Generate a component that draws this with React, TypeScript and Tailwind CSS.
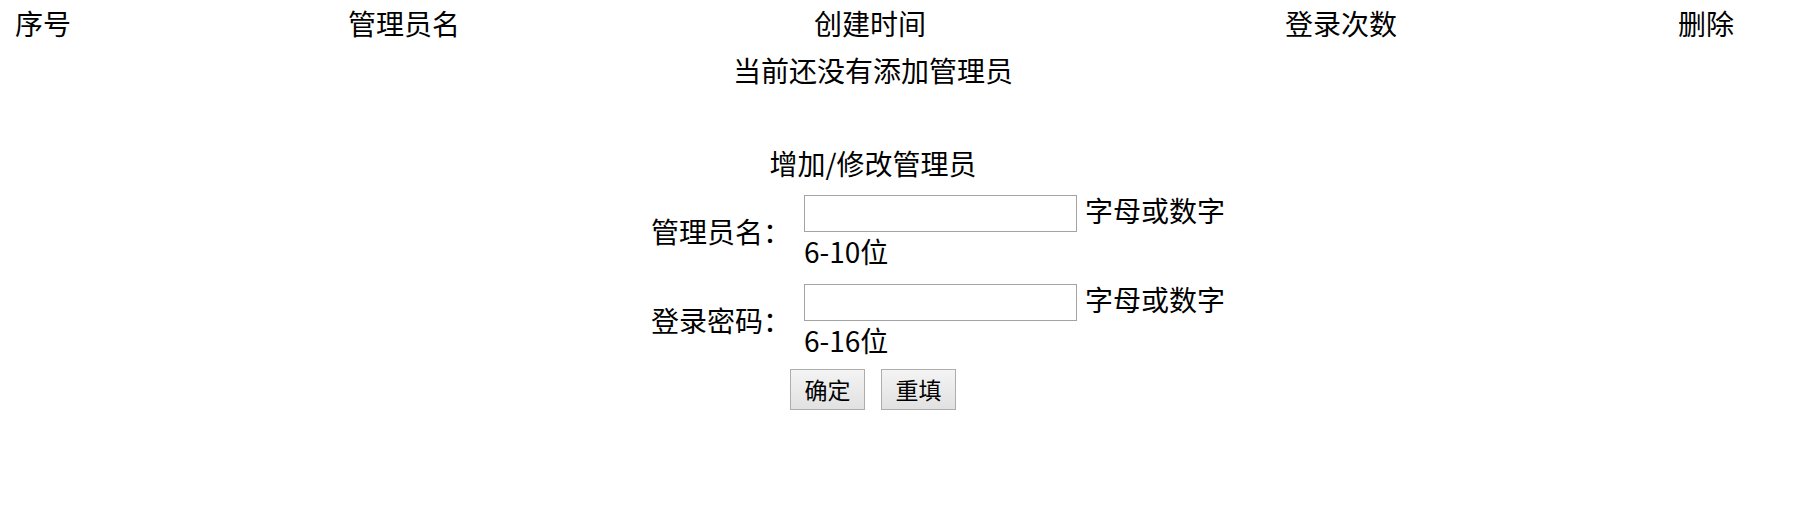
import React from 'react'

const font = "font-['Noto_Sans_CJK_SC','Noto_Sans',sans-serif]"

const FormRow: React.FC<{ label: string; hint: string; range: string }> = ({ label, hint, range }) => (
  <>
    <div className="flex items-center justify-end whitespace-nowrap leading-[30px]">{label}</div>
    <div className="flex flex-col whitespace-nowrap">
      <div className="flex items-start">
        <input type="text" className="h-[37px] w-[273px] shrink-0 border border-[#a3a3a3] bg-white outline-none" />
        <span className="ml-[8px] leading-[30px]">{hint}</span>
      </div>
      <span className="mt-[4px] leading-[30px]">{range}</span>
    </div>
  </>
)

const App: React.FC = () => {
  return (
    <div className={`min-h-[519px] bg-white text-black ${font}`}>
      <div className="ml-[14px] w-[1718px] text-[28px]">
        {/* Table head */}
        <div className="grid grid-cols-[58px_664px_268px_674px_56px] whitespace-nowrap text-center leading-[47px]">
          <div>序号</div>
          <div>管理员名</div>
          <div>创建时间</div>
          <div>登录次数</div>
          <div>删除</div>
        </div>
        <div className="text-center leading-[47px]">当前还没有添加管理员</div>

        {/* Add / edit form */}
        <div className="mt-[54px] text-center leading-[30px]">增加/修改管理员</div>
        <div className="mt-[17px] flex justify-center">
          <div className="grid w-[444px] grid-cols-[140px_291px] gap-x-[13px] gap-y-[18px]">
            <FormRow label="管理员名：" hint="字母或数字" range="6-10位" />
            <FormRow label="登录密码：" hint="字母或数字" range="6-16位" />
          </div>
        </div>
        <div className="mt-[14px] flex justify-center gap-[16px]">
          <button className="h-[41px] w-[75px] border border-[#adadad] bg-linear-to-b from-[#f4f4f4] to-[#e1e1e1] text-[23px] leading-none">
            确定
          </button>
          <button className="h-[41px] w-[75px] border border-[#adadad] bg-linear-to-b from-[#f4f4f4] to-[#e1e1e1] text-[23px] leading-none">
            重填
          </button>
        </div>
      </div>
    </div>
  )
}

export default App
